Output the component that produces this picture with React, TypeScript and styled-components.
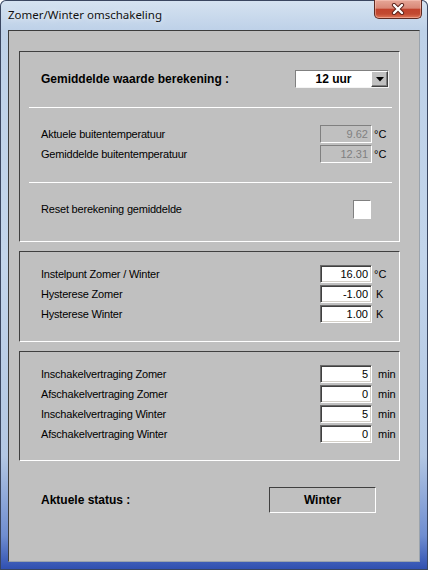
import React from "react";
import styled, { createGlobalStyle } from "styled-components";

const GlobalStyle = createGlobalStyle`
  html, body {
    margin: 0;
    padding: 0;
    width: 428px;
    height: 570px;
    overflow: hidden;
    background: #ffffff;
  }
  * { box-sizing: border-box; }
`;

const Window = styled.div`
  width: 428px;
  height: 570px;
  display: flex;
  flex-direction: column;
  background: linear-gradient(
    180deg,
    #d6e3f1 0px,
    #bed1e8 30px,
    #c3d5eb 45%,
    #b3c7e3 80%,
    #6f8dd0 94%,
    #2e4eb0 100%
  );
  box-shadow: inset 0 0 0 1px #3a4660;
  border-radius: 6px 6px 0 0;
`;

const TitleBar = styled.div`
  height: 30px;
  flex: none;
  display: flex;
  align-items: flex-start;
  justify-content: space-between;
  padding-left: 8px;
  padding-right: 6px;
`;

const TitleText = styled.span`
  font-family: "Noto Sans", "Open Sans", sans-serif;
  font-size: 11.5px;
  line-height: 30px;
  color: #111;
  text-shadow: 0 0 6px rgba(255, 255, 255, 0.9);
`;

const CloseButton = styled.div`
  width: 48px;
  height: 19px;
  display: flex;
  align-items: center;
  justify-content: center;
  border: 1px solid #5e2a22;
  border-top: none;
  border-radius: 0 0 5px 5px;
  background: linear-gradient(
    180deg,
    #e6a798 0%,
    #d98877 45%,
    #c1432d 52%,
    #c24a32 78%,
    #e0785a 100%
  );
  box-shadow: inset 0 0 0 1px rgba(255, 210, 200, 0.45);
`;

const Client = styled.div`
  flex: 1;
  margin: 0 8px 8px 8px;
  background: #c0c0c0;
  border: 1px solid;
  border-color: #3c3c3c #9aa3ad #9aa3ad #3c3c3c;
  padding: 20px 19px 0 10px;
  display: flex;
  flex-direction: column;
  gap: 9px;
`;

const Panel = styled.div<{ $pt?: number; $pb?: number }>`
  border: 1px solid;
  border-color: #404040 #ffffff #ffffff #404040;
  padding-top: ${(p) => p.$pt ?? 0}px;
  padding-bottom: ${(p) => p.$pb ?? 0}px;
  display: flex;
  flex-direction: column;
`;

const Separator = styled.div`
  height: 2px;
  margin: 0 7px 0 9px;
  border-bottom: 1px solid #ffffff;
`;

const Section = styled.div<{ $h: number; $pt: number }>`
  height: ${(p) => p.$h}px;
  padding-top: ${(p) => p.$pt}px;
  display: flex;
  flex-direction: column;
`;

const HeaderRow = styled.div`
  height: 54px;
  display: flex;
  align-items: center;
  justify-content: space-between;
  padding: 0 10px 0 21px;
`;

const BoldLabel = styled.span`
  font-family: "Liberation Sans", Arial, sans-serif;
  font-size: 12px;
  font-weight: bold;
  color: #000;
`;

const Row = styled.div`
  height: 20px;
  display: grid;
  grid-template-columns: 1fr 52px 27px;
  align-items: center;
  padding-left: 21px;
`;

const Label = styled.span`
  font-family: "Liberation Sans", Arial, sans-serif;
  font-size: 11px;
  letter-spacing: -0.2px;
  color: #000;
  white-space: nowrap;
`;

const Unit = styled.span<{ $pl: number }>`
  font-family: "Liberation Sans", Arial, sans-serif;
  font-size: 11px;
  color: #000;
  padding-left: ${(p) => p.$pl}px;
`;

const Field = styled.div<{ $readOnly?: boolean }>`
  height: 18px;
  display: flex;
  align-items: center;
  justify-content: flex-end;
  padding-right: 3px;
  font-family: "Liberation Sans", Arial, sans-serif;
  font-size: 11px;
  border: 1px solid;
  background: ${(p) => (p.$readOnly ? "#c0c0c0" : "#ffffff")};
  color: ${(p) => (p.$readOnly ? "#808080" : "#000000")};
  border-color: ${(p) =>
    p.$readOnly ? "#808080 #ffffff #ffffff #808080" : "#6a6a6a #ffffff #ffffff #6a6a6a"};
  box-shadow: ${(p) =>
    p.$readOnly ? "none" : "inset 1px 1px 0 #404040, inset -1px -1px 0 #d4d0c8"};
`;

const Checkbox = styled.div`
  width: 18px;
  height: 19px;
  justify-self: end;
  margin-right: 1px;
  background: #ffffff;
  border: 1px solid;
  border-color: #808080 #ffffff #ffffff #808080;
`;

const Dropdown = styled.div`
  width: 94px;
  height: 18px;
  display: flex;
  align-items: stretch;
  background: #ffffff;
  border: 1px solid;
  border-color: #808080 #f4f4f4 #f4f4f4 #808080;
`;

const DropdownValue = styled.span`
  flex: 1;
  display: flex;
  align-items: center;
  justify-content: center;
  font-family: "Liberation Sans", Arial, sans-serif;
  font-size: 12px;
  font-weight: bold;
  color: #000;
`;

const DropdownArrow = styled.div`
  width: 17px;
  display: flex;
  align-items: center;
  justify-content: center;
  background: #c0c0c0;
  border: 1px solid;
  border-color: #ffffff #404040 #404040 #ffffff;
  box-shadow: inset -1px -1px 0 #808080;
`;

const StatusRow = styled.div`
  margin-top: 17px;
  height: 26px;
  display: flex;
  align-items: center;
  justify-content: space-between;
  padding: 0 24px 0 22px;
`;

const StatusBox = styled.div`
  width: 107px;
  height: 26px;
  display: flex;
  align-items: center;
  justify-content: center;
  border: 1px solid;
  border-color: #404040 #ffffff #ffffff #404040;
`;

type FieldRow = { label: string; value: string; unit: string; pl: number };

const setpoints: FieldRow[] = [
  { label: "Instelpunt Zomer / Winter", value: "16.00", unit: "°C", pl: 2 },
  { label: "Hysterese Zomer", value: "-1.00", unit: "K", pl: 4 },
  { label: "Hysterese Winter", value: "1.00", unit: "K", pl: 4 },
];

const delays: FieldRow[] = [
  { label: "Inschakelvertraging Zomer", value: "5", unit: "min", pl: 6 },
  { label: "Afschakelvertraging Zomer", value: "0", unit: "min", pl: 6 },
  { label: "Inschakelvertraging Winter", value: "5", unit: "min", pl: 6 },
  { label: "Afschakelvertraging Winter", value: "0", unit: "min", pl: 6 },
];

const temps: FieldRow[] = [
  { label: "Aktuele buitentemperatuur", value: "9.62", unit: "°C", pl: 2 },
  { label: "Gemiddelde buitentemperatuur", value: "12.31", unit: "°C", pl: 2 },
];

const CloseIcon = () => (
  <svg width="14" height="12" viewBox="0 0 14 12">
    <path d="M3 2 L11 10 M11 2 L3 10" stroke="#5a2018" strokeWidth="4.2" strokeLinecap="round" />
    <path d="M3 2 L11 10 M11 2 L3 10" stroke="#ffffff" strokeWidth="2.4" strokeLinecap="round" />
  </svg>
);

const ArrowIcon = () => (
  <svg width="8" height="5" viewBox="0 0 8 5">
    <path d="M0 0 H8 L4 4.5 Z" fill="#000" />
  </svg>
);

const FieldRows = ({ rows, readOnly }: { rows: FieldRow[]; readOnly?: boolean }) => (
  <>
    {rows.map((r) => (
      <Row key={r.label}>
        <Label>{r.label}</Label>
        <Field $readOnly={readOnly}>{r.value}</Field>
        <Unit $pl={r.pl}>{r.unit}</Unit>
      </Row>
    ))}
  </>
);

export default function App() {
  return (
    <>
      <GlobalStyle />
      <Window>
        <TitleBar>
          <TitleText>Zomer/Winter omschakeling</TitleText>
          <CloseButton>
            <CloseIcon />
          </CloseButton>
        </TitleBar>
        <Client>
          <Panel>
            <HeaderRow>
              <BoldLabel>Gemiddelde waarde berekening :</BoldLabel>
              <Dropdown>
                <DropdownValue>12 uur</DropdownValue>
                <DropdownArrow>
                  <ArrowIcon />
                </DropdownArrow>
              </Dropdown>
            </HeaderRow>
            <Separator />
            <Section $h={73} $pt={16}>
              <FieldRows rows={temps} readOnly />
            </Section>
            <Separator />
            <Section $h={58} $pt={16}>
              <Row>
                <Label>Reset berekening gemiddelde</Label>
                <Checkbox />
                <span />
              </Row>
            </Section>
          </Panel>
          <Panel $pt={12} $pb={17}>
            <FieldRows rows={setpoints} />
          </Panel>
          <Panel $pt={12} $pb={16}>
            <FieldRows rows={delays} />
          </Panel>
          <StatusRow>
            <BoldLabel>Aktuele status :</BoldLabel>
            <StatusBox>
              <BoldLabel>Winter</BoldLabel>
            </StatusBox>
          </StatusRow>
        </Client>
      </Window>
    </>
  );
}
